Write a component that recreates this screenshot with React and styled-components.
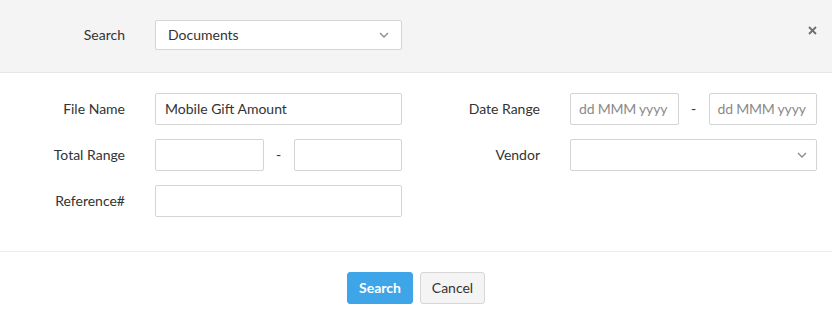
import React from "react";
import styled, { createGlobalStyle } from "styled-components";

const Global = createGlobalStyle`
  html, body { margin: 0; padding: 0; background: #fff; }
  body { font-family: Lato, "Open Sans", sans-serif; font-size: 14px; color: #333; }
  * { box-sizing: border-box; }
`;

const Dialog = styled.div`
  width: 832px;
  height: 322px;
  background: #fff;
  display: flex;
  flex-direction: column;
`;

const Header = styled.div`
  position: relative;
  height: 73px;
  background: #f4f4f4;
  border-bottom: 1px solid #e6e6e6;
  padding: 20px 15px 0;
`;

const Close = styled.button`
  position: absolute;
  top: 23px;
  right: 12px;
  width: 16px;
  height: 14px;
  border: 0;
  background: transparent;
  padding: 0;
  display: flex;
  align-items: center;
  justify-content: center;
  cursor: pointer;
`;

const Row = styled.div`
  display: grid;
  grid-template-columns: 110px 247px;
  column-gap: 30px;
  align-items: center;
  height: ${(p) => p.$h || 32}px;
`;

const Label = styled.label`
  text-align: right;
  font-size: 14px;
  line-height: 16px;
  padding-bottom: 1px;
  color: #333;
`;

const Body = styled.div`
  padding: 20px 15px 0;
  height: 179px;
  border-bottom: 1px solid #ebebeb;
  display: grid;
  grid-template-columns: 387px 387px;
  column-gap: 28px;
  align-content: start;
`;

const Column = styled.div`
  display: flex;
  flex-direction: column;
  gap: 14px;
`;

const Input = styled.div`
  height: ${(p) => p.$h || 32}px;
  border: 1px solid #d4d4d4;
  border-radius: 2px;
  background: #fff;
  padding: 0 ${(p) => (p.$pad != null ? p.$pad : 9)}px 1px;
  display: flex;
  align-items: center;
  justify-content: space-between;
  font-size: 14px;
  line-height: 16px;
  letter-spacing: ${(p) => (p.$placeholder ? "-0.2px" : "0")};
  color: ${(p) => (p.$placeholder ? "#8a8a8a" : "#333")};
  white-space: nowrap;
  overflow: hidden;
`;

const Range = styled.div`
  display: grid;
  grid-template-columns: 1fr 30px 1fr;
  align-items: center;
`;

const Dash = styled.span`
  text-align: center;
  color: #333;
  padding-bottom: 1px;
`;

const Footer = styled.div`
  flex: 1;
  display: flex;
  justify-content: center;
  align-items: flex-start;
  gap: 7px;
  padding-top: 20px;
`;

const Button = styled.button`
  height: 32px;
  padding: 0 10px 1px;
  border-radius: 3px;
  font-family: inherit;
  font-size: 14px;
  border: 1px solid ${(p) => (p.$primary ? "#3ea5e8" : "#d6d6d6")};
  background: ${(p) => (p.$primary ? "#3ea5e8" : "#f4f4f4")};
  color: ${(p) => (p.$primary ? "#fff" : "#333")};
  font-weight: ${(p) => (p.$primary ? 700 : 400)};
  min-width: ${(p) => p.$w}px;
`;

const Chevron = () => (
  <svg width="10" height="6" viewBox="0 0 10 6" fill="none">
    <path d="M1 1l4 4 4-4" stroke="#8a8a8a" strokeWidth="1.3" />
  </svg>
);

export default function App() {
  return (
    <>
      <Global />
      <Dialog>
        <Header>
          <Row $h={30}>
            <Label>Search</Label>
            <Input $h={30} $pad={12}>
              <span>Documents</span>
              <Chevron />
            </Input>
          </Row>
          <Close aria-label="close">
            <svg width="9" height="9" viewBox="0 0 9 9">
              <path d="M1 1l7 7M8 1L1 8" stroke="#6f6f6f" strokeWidth="1.8" />
            </svg>
          </Close>
        </Header>
        <Body>
          <Column>
            <Row>
              <Label>File Name</Label>
              <Input>Mobile Gift Amount</Input>
            </Row>
            <Row>
              <Label>Total Range</Label>
              <Range>
                <Input />
                <Dash>-</Dash>
                <Input />
              </Range>
            </Row>
            <Row>
              <Label>Reference#</Label>
              <Input />
            </Row>
          </Column>
          <Column>
            <Row>
              <Label>Date Range</Label>
              <Range>
                <Input $placeholder $pad={8}>dd MMM yyyy</Input>
                <Dash>-</Dash>
                <Input $placeholder $pad={8}>dd MMM yyyy</Input>
              </Range>
            </Row>
            <Row>
              <Label>Vendor</Label>
              <Input>
                <span />
                <Chevron />
              </Input>
            </Row>
          </Column>
        </Body>
        <Footer>
          <Button $primary $w={66}>Search</Button>
          <Button $w={65}>Cancel</Button>
        </Footer>
      </Dialog>
    </>
  );
}
